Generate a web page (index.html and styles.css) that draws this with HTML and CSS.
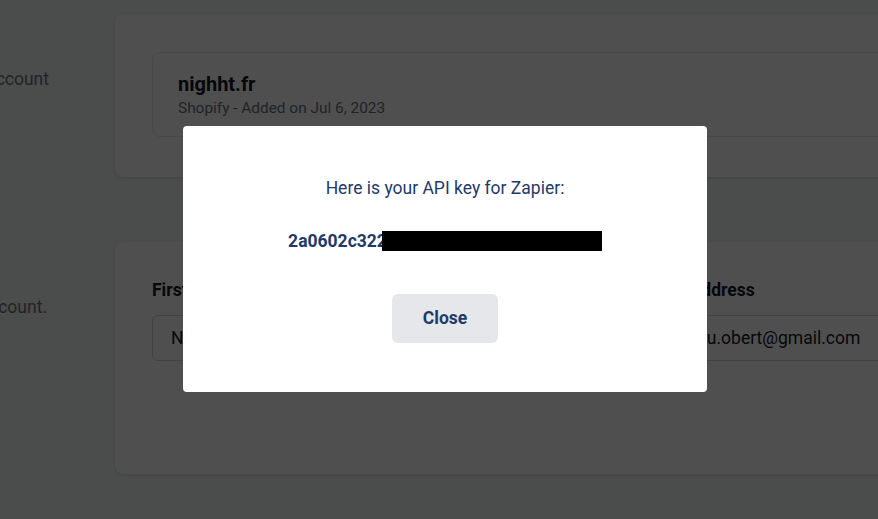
FILE: index.html
```html
<!DOCTYPE html>
<html lang="en">
<head>
<meta charset="utf-8">
<title>Settings</title>
<link rel="stylesheet" href="styles.css">
</head>
<body>
<div class="page">
  <section class="row">
    <div class="aside">
      <h2 class="aside-title">Stores</h2>
      <p class="aside-text">Stores linked to your account</p>
    </div>
    <div class="card card-stores">
      <div class="store">
        <div class="store-name">nighht.fr</div>
        <div class="store-meta">Shopify - Added on Jul 6, 2023</div>
      </div>
    </div>
  </section>

  <section class="row">
    <div class="aside aside-period">
      <h2 class="aside-title">Profile</h2>
      <p class="aside-text">Details of your account.</p>
    </div>
    <div class="card card-profile">
      <div class="fields">
        <div class="field">
          <label class="field-label">First name</label>
          <div class="input">Nathan</div>
        </div>
        <div class="field">
          <label class="field-label">Last name</label>
          <div class="input">Obert</div>
        </div>
        <div class="field">
          <label class="field-label">Email address</label>
          <div class="input">emanu.obert@gmail.com</div>
        </div>
      </div>
    </div>
  </section>
</div>

<div class="overlay">
  <div class="modal">
    <p class="modal-text">Here is your API key for Zapier:</p>
    <p class="modal-key">2a0602c322<span class="redact"></span></p>
    <button class="btn-close">Close</button>
  </div>
</div>
</body>
</html>
```

FILE: styles.css
```css
* { box-sizing: border-box; }

html, body {
  margin: 0;
  padding: 0;
  height: 100%;
  overflow: hidden;
}

body {
  background: #f3f4f6;
  font-family: Roboto, "Liberation Sans", sans-serif;
  color: #111827;
}

.page {
  padding-top: 14px;
  display: flex;
  flex-direction: column;
  gap: 65px;
}

.row {
  display: flex;
  align-items: flex-start;
}

.aside {
  width: 115px;
  flex: none;
  overflow: hidden;
  display: flex;
  flex-direction: column;
  align-items: flex-end;
  padding-right: 66px;
  padding-top: 25px;
}

.aside-period { padding-right: 68px; }

.aside-title {
  margin: 0;
  font-size: 19px;
  line-height: 28px;
  font-weight: 700;
  white-space: nowrap;
  visibility: hidden;
}

.aside-text {
  margin: 0;
  font-size: 17.5px;
  line-height: 24px;
  color: #6b7280;
  white-space: nowrap;
}

.card {
  flex: none;
  width: 900px;
  background: #ffffff;
  border-radius: 8px;
  box-shadow: 0 1px 3px rgba(0, 0, 0, 0.12);
}

.card-stores {
  padding: 38px 37px 40px;
}

.store {
  border: 1px solid #e5e7eb;
  border-radius: 8px;
  padding: 17px 25px 18px;
}

.store-name {
  font-size: 20px;
  line-height: 28px;
  font-weight: 700;
  color: #111827;
}

.store-meta {
  font-size: 15.4px;
  line-height: 20px;
  color: #6b7280;
}

.card-profile {
  height: 232px;
  padding: 36px 37px;
}

.fields {
  display: grid;
  grid-template-columns: repeat(3, 222px);
  column-gap: 24px;
}

.field {
  display: flex;
  flex-direction: column;
  gap: 13px;
}

.field-label {
  font-size: 17.5px;
  line-height: 24px;
  font-weight: 700;
  color: #111827;
}

.input {
  height: 46px;
  border: 1px solid #d1d5db;
  border-radius: 6px;
  padding: 0 18px;
  display: flex;
  align-items: center;
  font-size: 17.5px;
  color: #111827;
  width: 260px;
  background: #fff;
}

.overlay {
  position: fixed;
  inset: 0;
  background: rgba(0, 0, 0, 0.69);
  display: flex;
  align-items: center;
  justify-content: center;
  padding-bottom: 2px;
}

.modal {
  margin-left: 12px;
  width: 524px;
  height: 266px;
  background: #ffffff;
  border-radius: 4px;
  padding: 49px 24px;
  display: flex;
  flex-direction: column;
  align-items: center;
  color: #1e3a6b;
}

.modal-text {
  margin: 0;
  font-size: 17.5px;
  line-height: 26px;
}

.modal-key {
  margin: 27px 0 0;
  font-size: 17.5px;
  line-height: 26px;
  font-weight: 700;
  display: flex;
  align-items: center;
}

.redact {
  display: inline-block;
  width: 220px;
  height: 20px;
  background: #000;
  margin-left: -5px;
}

.btn-close {
  margin-top: 40px;
  width: 106px;
  height: 49px;
  border: none;
  border-radius: 6px;
  background: #e5e7eb;
  color: #1e3a6b;
  font-family: Roboto, "Liberation Sans", sans-serif;
  font-size: 17.5px;
  font-weight: 700;
}
```
